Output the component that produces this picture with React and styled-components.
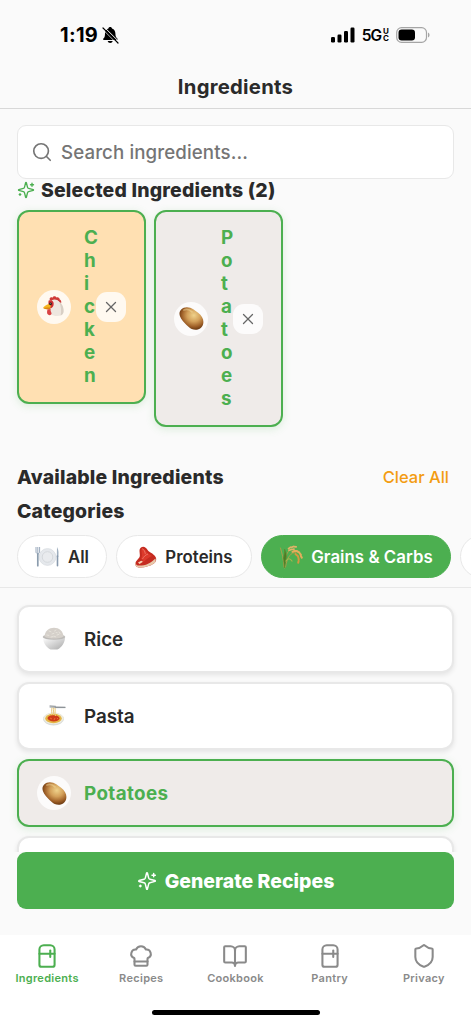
import React from 'react';
import styled, { createGlobalStyle, css } from 'styled-components';
import { Search, X, Refrigerator, ChefHat, BookOpen, Shield } from 'lucide-react';

const GlobalStyle = createGlobalStyle`
  *, *::before, *::after { box-sizing: border-box; }
  html, body { margin: 0; background: #fafafa; }
  body {
    overflow: hidden;
    font-family: Inter, "Liberation Sans", sans-serif;
    color: #2a2a2a;
    -webkit-font-smoothing: antialiased;
  }
  button { font: inherit; border: 0; padding: 0; margin: 0; background: none; color: inherit; }
  svg { display: block; flex: none; }
`;

const GREEN = '#4caf50';

const Screen = styled.div`
  display: flex;
  flex-direction: column;
  width: 471px;
  height: 1024px;
  overflow: hidden;
  background: #fafafa;
`;

const StatusBar = styled.div`
  display: flex;
  align-items: center;
  justify-content: space-between;
  height: 70px;
  padding: 0 41px 0 60px;
  color: #000;
`;

const Clock = styled.div`
  display: flex;
  align-items: center;
  gap: 4px;
  font-size: 20px;
  font-weight: 700;
  letter-spacing: 0.3px;
`;

const Signals = styled.div`
  display: flex;
  align-items: center;
  gap: 7px;
`;

const Network = styled.div`
  display: flex;
  align-items: center;
  font-size: 15.5px;
  font-weight: 600;
  letter-spacing: -1px;
`;

const NetworkSuffix = styled.span`
  display: flex;
  flex-direction: column;
  margin-left: 2px;
  font-size: 8px;
  font-weight: 700;
  line-height: 7px;
  letter-spacing: 0;
`;

const Header = styled.header`
  display: flex;
  justify-content: center;
  height: 39px;
  padding-top: 4px;
  border-bottom: 1px solid #d8d8d8;
`;

const Title = styled.h1`
  margin: 0;
  font-size: 20.3px;
  line-height: 26px;
  font-weight: 700;
  letter-spacing: 0.25px;
`;

const SearchField = styled.label`
  display: flex;
  align-items: center;
  gap: 8px;
  height: 54px;
  margin: 16px 17px 0;
  padding: 0 14px 0 13px;
  border: 1px solid #e8e8e8;
  border-radius: 9px;
  background: #fff;
  color: #757575;
`;

const SearchInput = styled.input`
  flex: 1;
  min-width: 0;
  border: 0;
  padding: 0;
  outline: 0;
  background: none;
  font-family: inherit;
  font-size: 18.7px;
  font-weight: 450;
  letter-spacing: 0.1px;
  &::placeholder { color: #757575; opacity: 1; }
`;

const SectionTitle = styled.h2`
  display: flex;
  align-items: center;
  gap: 6px;
  margin: 0;
  font-size: 19.4px;
  line-height: 24px;
  font-weight: 850;
  letter-spacing: 0.2px;
  svg { color: ${GREEN}; }
`;

const SelectedSection = styled.section`
  height: 285px;
  padding: 0 17px;
  margin-top: -1px;
`;

const ChipRow = styled.div`
  display: flex;
  align-items: flex-start;
  gap: 8px;
  margin-top: 8px;
`;

const activeBox = css`
  border: 2px solid ${GREEN};
  box-shadow: 0 2px 9px rgba(76, 175, 80, 0.18);
`;

const SelectedCard = styled.div`
  ${activeBox}
  display: flex;
  align-items: center;
  width: 129px;
  padding: 15px 18px 14px;
  border-radius: 12px;
  background: ${(p) => p.$tint};
`;

const EmojiDisc = styled.div`
  display: flex;
  align-items: center;
  justify-content: center;
  flex: none;
  width: 34px;
  height: 34px;
  border-radius: 50%;
  background: ${(p) => (p.$plain ? 'transparent' : 'rgba(255, 255, 255, 0.8)')};
`;

const NarrowName = styled.span`
  flex: none;
  width: 14px;
  margin: 0 -2px 0 13px;
  font-size: 18.8px;
  line-height: 22.95px;
  font-weight: 750;
  color: ${GREEN};
  word-break: break-all;
`;

const RemoveButton = styled.button`
  display: flex;
  align-items: center;
  justify-content: center;
  flex: none;
  width: 30px;
  height: 30px;
  border-radius: 11px;
  background: rgba(255, 255, 255, 0.8);
  color: #666;
`;

const SectionHead = styled.div`
  display: flex;
  align-items: center;
  justify-content: space-between;
  height: 25px;
  padding: 0 22px 0 17px;
  margin-top: 1px;
`;

const ClearButton = styled.button`
  color: #f39c12;
  font-size: 16.5px;
  font-weight: 500;
  letter-spacing: 0;
`;

const Categories = styled.section`
  height: 99px;
  padding: 10px 0 0 17px;
  margin-bottom: 17px;
  border-bottom: 1px solid #e8e8e8;
  overflow: hidden;
`;

const Pills = styled.div`
  display: flex;
  gap: 9px;
  margin-top: 12px;
`;

const Pill = styled.button`
  display: flex;
  align-items: center;
  justify-content: center;
  gap: 8px;
  flex: none;
  width: ${(p) => p.$width}px;
  height: 43px;
  border: 1px solid ${(p) => (p.$active ? GREEN : '#e8e8e8')};
  border-radius: 22px;
  background: ${(p) => (p.$active ? GREEN : '#fff')};
  color: ${(p) => (p.$active ? '#fff' : '#2a2a2a')};
  font-size: 16.8px;
  font-weight: 600;
  letter-spacing: 0.05px;
`;

const ListArea = styled.main`
  display: flex;
  flex-direction: column;
  gap: 9px;
  height: 247px;
  padding: 0 17px;
  flex: none;
`;

const ListRow = styled.div`
  display: flex;
  align-items: center;
  gap: 13px;
  flex: none;
  height: 68px;
  padding: 0 18px;
  border: 2px solid #e8e8e8;
  border-radius: 12px;
  background: ${(p) => p.$tint || '#fff'};
  box-shadow: 0 2px 5px rgba(0, 0, 0, 0.09);
  font-size: 18.8px;
  font-weight: ${(p) => (p.$active ? 700 : 600)};
  letter-spacing: ${(p) => (p.$active ? '0.4px' : '0')};
  ${(p) => p.$active && css`${activeBox} color: ${GREEN};`}
`;

const Footer = styled.div`
  position: relative;
  flex: none;
  height: 83px;
  padding: 0 17px;
  background: #fafafa;
`;

const GenerateButton = styled.button`
  display: flex;
  align-items: center;
  justify-content: center;
  gap: 8px;
  width: 100%;
  height: 57px;
  border-radius: 9px;
  background: ${GREEN};
  color: #fff;
  font-size: 19.4px;
  font-weight: 850;
  letter-spacing: 0.05px;
`;

const TabBar = styled.nav`
  display: grid;
  grid-template-columns: repeat(5, 1fr);
  flex: none;
  height: 70px;
  padding-top: 8px;
  background: #fff;
`;

const Tab = styled.button`
  display: flex;
  flex-direction: column;
  align-items: center;
  align-self: start;
  gap: 2px;
  color: ${(p) => (p.$active ? GREEN : '#8a8a8a')};
  font-size: 11px;
  line-height: 14px;
  font-weight: 600;
  letter-spacing: 0.3px;
`;

const HomeArea = styled.div`
  display: flex;
  justify-content: center;
  flex: none;
  height: 19px;
  padding-top: 5px;
  background: #fff;
`;

const HomeIndicator = styled.div`
  width: 168px;
  height: 5px;
  border-radius: 3px;
  background: #000;
`;

const Sparkles = ({ size }) => (
  <svg width={size} height={size} viewBox="0 0 24 24" fill="none" stroke="currentColor" strokeWidth="1.8" strokeLinecap="round" strokeLinejoin="round">
    <path d="M9.937 15.5A2 2 0 0 0 8.5 14.063l-6.135-1.582a.5.5 0 0 1 0-.962L8.5 9.936A2 2 0 0 0 9.937 8.5l1.582-6.135a.5.5 0 0 1 .963 0L14.063 8.5A2 2 0 0 0 15.5 9.937l6.135 1.581a.5.5 0 0 1 0 .964L15.5 14.063a2 2 0 0 0-1.437 1.437l-1.582 6.135a.5.5 0 0 1-.963 0z" />
    <path d="M20 3v4M22 5h-4M4 17v2M5 18H3" />
  </svg>
);

const BellOff = () => (
  <svg width="17" height="18" viewBox="0 0 17 18">
    <path d="M8.2 1C9.2 1 9.8 1.6 10 2.4c2.3.8 3.4 2.7 3.4 5.1 0 3 .8 4 1.9 5.1.7.8.4 1.5-.6 1.5H2c-1 0-1.3-.8-.6-1.5C2.6 11.5 3 10.4 3 7.5c0-2.500 1.100-4.400 3.400-5.100C6.600 1.600 7.200 1 8.200 1Z" />
    <path d="M5.700 15h5c-.3 1.200-1.200 1.900-2.500 1.900S6 16.200 5.700 15Z" />
    <path d="M2 .9 16.800 15.500" stroke="#fafafa" strokeWidth="1" />
    <path d="M1 2 16 17" stroke="#000" strokeWidth="1.200" strokeLinecap="round" />
    <path d="M.5 3.200 14 16.700" stroke="#fafafa" strokeWidth=".7" />
  </svg>
);

const Bars = () => (
  <svg width="24" height="16" viewBox="0 0 24 16">
    <rect x="0" y="10" width="4" height="5.500" rx="1.200" />
    <rect x="6.500" y="7.500" width="4" height="8" rx="1.200" />
    <rect x="13" y="4" width="4" height="11.500" rx="1.200" />
    <rect x="19.500" y="0.500" width="4" height="15" rx="1.200" />
  </svg>
);

const Battery = () => (
  <svg width="34" height="16" viewBox="0 0 34 16">
    <rect x=".7" y=".7" width="29.800" height="14.600" rx="4.800" fill="none" stroke="#a5a5a5" strokeWidth="1.200" />
    <rect x="2.500" y="2.500" width="16.500" height="11" rx="3.200" />
    <path d="M32 5.500c2 .8 2 4.200 0 5Z" fill="#a5a5a5" />
  </svg>
);

const Chicken = () => (
  <svg width="24" height="24" viewBox="0 0 24 24">
    <path d="M7.600 4.600C7.500 2.200 9.400 1.900 10.500 2.700 11.500.9 13.600 1 14.500 2.500c1.800-.7 3.100.5 3.200 2 1.300.5 2 2 1.400 3.800L15.500 5.500l-6 .7Z" fill="#cf3a38" />
    <path d="M8 8c.6-3.700 6.300-5 9-1.300 1.200 1.700 1.300 3 2.700 4.500 1.700 1.900 2 3.800 1.800 5.800-.3 2.800-2.500 3.900-6.500 3.900-5.200 0-7-2.100-6.800-5.500Z" fill="#eee7df" />
    <path d="M17 6.700c3.700 2 5 6.500 4.500 10.300-.3 1.900-1.400 2.900-2.900 3.400 1-4.300.6-9.500-1.600-13.700Z" fill="#d8cfc5" />
    <path d="M6.500 5.800c2.700-1.300 5.200.2 5.200 3.100 0 2.400-1.600 4.200-3.600 4.500L6.400 11Z" fill="#cf3033" />
    <path d="M6.600 9c-2.300.9-4.800 2.400-5.500 4 1.600.9 4.400 1.200 7 .5l.8-3Z" fill="#f5b51f" />
    <path d="M1.100 13c2.400-.6 4.700-.8 7.400-.4l-.6 1.600c-2.500.5-5.200.1-6.800-1.200Z" fill="#db8312" />
    <path d="M5.500 14.400c-.6 2-.7 4.100.5 5.200 1.500 1.300 3.900.6 3.500-1.500-.3-1.500-1.300-2.200-.8-4.200Z" fill="#d94344" />
    <circle cx="8.500" cy="8.800" r="1.400" fill="#25201c" />
    <circle cx="8.200" cy="8.300" r=".4" fill="#fff" />
  </svg>
);

const Potato = () => (
  <svg width="25" height="25" viewBox="0 0 25 25">
    <defs>
      <radialGradient id="potatoSkin" cx="60%" cy="36%" r="66%">
        <stop offset="0" stopColor="#efd28b" />
        <stop offset=".42" stopColor="#d3a05a" />
        <stop offset=".75" stopColor="#9f6028" />
        <stop offset="1" stopColor="#63340f" />
      </radialGradient>
    </defs>
    <path d="M2.200 3.400C5.200.3 10.700.6 14.300 3.300c3 2.300 7 4.600 8.800 7.900 2.300 4 1.500 9-2 11.300-3.700 2.500-8.800 1.300-11.600-1.700-2.600-2.700-5.300-5-7.300-8.100C.1 9.400-.3 6 2.200 3.400Z" fill="url(#potatoSkin)" />
    <path d="M5 4c3-1.500 5.500-.5 8 1.800" stroke="#f5dfa1" strokeWidth="1.700" opacity=".45" fill="none" strokeLinecap="round" />
  </svg>
);

const Plate = () => (
  <svg width="25" height="22" viewBox="0 0 25 22">
    <circle cx="12.500" cy="11" r="8.400" fill="#e5e8ec" stroke="#d7dbe0" strokeWidth=".7" />
    <circle cx="12.500" cy="11" r="5.300" fill="#e9ebee" stroke="#d0d4d8" strokeWidth=".8" />
    <path d="M1 1v5c0 2 3.600 2 3.600 0V1M2.800 1v8" stroke="#8fa0b5" strokeWidth=".9" fill="none" />
    <path d="M2.800 8v11.700" stroke="#8b9cad" strokeWidth="1.700" strokeLinecap="round" />
    <path d="M22 1c2 3 1.600 7 1.300 10h-1.500Z" fill="#9fafbf" />
    <path d="M22.500 10v9.800" stroke="#8799ad" strokeWidth="1.600" strokeLinecap="round" />
  </svg>
);

const Meat = () => (
  <svg width="22" height="22" viewBox="0 0 22 22">
    <path d="M6 1.600C8.500-.3 11 1.600 12.800 4.200c1.500 2.300 3.500 2 6.700 5.200 2.500 2.500 2.200 6-.7 8.200-3.800 2.800-10.200 4.300-15.200 3.800C.3 21-.3 17.900 1 15.600c.9-1.500 2.300-2.600 3.300-4C5.400 9.800 4.500 7.300 4.500 5.100c0-1.500.4-2.600 1.500-3.500Z" fill="#c52b20" />
    <path d="M1 15.800c-.5 2.500.6 3.700 3 3.800 6 .2 12-2.500 16.400-7.200.7 2.100.2 3.900-1.600 5.200-3.800 2.800-10.200 4.300-15.200 3.800C.4 21-.2 18.300 1 15.800Z" fill="#e7c9ab" />
    <path d="M6.500 3c2-1 3.800.7 5 2.700 1.300 2.200 3.300 2.500 5.500 4.300-3 1.200-5.700 3.200-8.300 6L6 12.500C8 10 6 6.300 6.500 3Z" fill="#dc392b" />
    <path d="M7.300 2.700c1.500.7 2.700 2.700 3 5.200M13 8c-2.600 1-4.300 2.700-5.500 5" stroke="#f08070" strokeWidth=".8" fill="none" />
    <path d="m3 16.500 3.300-1.700 1.700 1-3.500 2.200Z" fill="#f5d4b4" />
  </svg>
);

const Grain = () => (
  <svg width="24" height="24" viewBox="0 0 24 24" fill="none" strokeLinecap="round">
    <path d="M5.500 23C5.500 14 7 7 12 4M6.500 22C8 12 12 7 17 7.500M5 22C4.500 14 3 8 1.500 3" stroke="#b59b4a" strokeWidth=".9" />
    <path d="M4.500 13 5.500 23 7 14C8 10 7 7 5.500 4c.3 4-.5 6-1 9Z" fill="#4f7a26" stroke="#5a8a2b" strokeWidth=".6" />
    <path d="M7 16c2-3 4-3 6 0" stroke="#a9b64f" strokeWidth="1.200" />
    <path d="M9.500 3.600 11.500 2.200M12.500 2.400l2-.9M15 1.700l2.200.2M10 5.300l2-.6M13 4.500l2-.3" stroke="#e0b368" strokeWidth="1.700" />
    <path d="m13.500 6.800 1.800-.8M16 6l2-.1M18.500 6.500l1.700.8M20.600 8.200l1.200 1.500M21.800 10.700l1 2" stroke="#e3ad5c" strokeWidth="2" />
    <path d="m16.500 9 1.300 1.200M18.500 10.500l.8 1.700M19.500 13l.2 1.900M19.600 16l-.4 1.800" stroke="#d59840" strokeWidth="2" />
  </svg>
);

const Rice = () => (
  <svg width="24" height="24" viewBox="0 0 24 24">
    <defs>
      <linearGradient id="bowl" x1="0" y1="0" x2="1" y2="1">
        <stop stopColor="#fff" />
        <stop offset="1" stopColor="#a9a9a9" />
      </linearGradient>
    </defs>
    <path d="M1 10.500h22c0 5-3.500 10-7.600 12.100H8.600C4.300 20.500 1 15.500 1 10.500Z" fill="url(#bowl)" />
    <ellipse cx="12" cy="10" rx="11.300" ry="2.700" fill="#bdbbb8" />
    <path d="M2.500 9.500C3 4 7 .8 12 .8S21 4 21.500 9.500c-4 2.800-15 2.800-19 0Z" fill="#d5d0ca" />
    <path d="m7 4 2 .8M14 3l-1.500 1M4.800 8l2 .4M10 7l2-.7M15 8l2-.7M17 5l1 1.500M9 10l2-.4M14 5.500l1.300.3M12 9.200l1.500.5" stroke="#e8e4dc" strokeWidth=".9" strokeLinecap="round" />
  </svg>
);

const Pasta = () => (
  <svg width="24" height="22" viewBox="0 0 24 22">
    <ellipse cx="11.500" cy="14" rx="10.500" ry="6.500" fill="#d9dcda" />
    <ellipse cx="11.500" cy="13.300" rx="10" ry="5.800" fill="#efede0" />
    <ellipse cx="11.500" cy="13.500" rx="8.300" ry="4.700" fill="#e5b646" />
    <path d="M5.500 13.500c0-2 2-3 5.500-3.300 4-.3 6.500 1.300 6.700 3.300-1.500 4-10.200 4-12.200 0Z" fill="#cf3b19" />
    <path d="m8 13 2 1M12 15l1-2M15 14l1-1" stroke="#ed6e36" strokeWidth="1" />
    <path d="M9.500 10c1-2-.5-4 .5-7.500M11.500 10c.5-3-.5-5 0-7.500M13.500 11c-1-3 0-5-.5-8" stroke="#e9c878" strokeWidth="1" fill="none" />
    <path d="M8 2h5.500l9.500.2M13 2.600h10M8 .9l5.500.4" stroke="#858a8e" strokeWidth=".9" fill="none" strokeLinecap="round" />
  </svg>
);

const selected = [
  { name: 'Chicken', tint: '#ffe0b2', Icon: Chicken },
  { name: 'Potatoes', tint: '#efebe9', Icon: Potato },
];

const categories = [
  { name: 'All', width: 90, Icon: Plate },
  { name: 'Proteins', width: 136, Icon: Meat },
  { name: 'Grains & Carbs', width: 190, Icon: Grain, active: true },
  { name: '', width: 150 },
];

const ingredients = [
  { name: 'Rice', Icon: Rice },
  { name: 'Pasta', Icon: Pasta },
  { name: 'Potatoes', Icon: Potato, active: true, tint: '#efebe9' },
];

const tabs = [
  { name: 'Ingredients', Icon: Refrigerator, active: true },
  { name: 'Recipes', Icon: ChefHat },
  { name: 'Cookbook', Icon: BookOpen },
  { name: 'Pantry', Icon: Refrigerator },
  { name: 'Privacy', Icon: Shield },
];

export default function App() {
  return (
    <Screen>
      <GlobalStyle />
      <StatusBar>
        <Clock>1:19<BellOff /></Clock>
        <Signals>
          <Bars />
          <Network>5G<NetworkSuffix><span>U</span><span>C</span></NetworkSuffix></Network>
          <Battery />
        </Signals>
      </StatusBar>
      <Header><Title>Ingredients</Title></Header>
      <SearchField>
        <Search size={22} strokeWidth={1.8} />
        <SearchInput placeholder="Search ingredients..." />
      </SearchField>
      <SelectedSection>
        <SectionTitle>
          <Sparkles size={18} />
          <span>Selected Ingredients (2)</span>
        </SectionTitle>
        <ChipRow>
          {selected.map(({ name, tint, Icon }) => (
            <SelectedCard key={name} $tint={tint}>
              <EmojiDisc><Icon /></EmojiDisc>
              <NarrowName>{name}</NarrowName>
              <RemoveButton aria-label={`Remove ${name}`}><X size={18} strokeWidth={1.7} /></RemoveButton>
            </SelectedCard>
          ))}
        </ChipRow>
      </SelectedSection>
      <SectionHead>
        <SectionTitle>Available Ingredients</SectionTitle>
        <ClearButton>Clear All</ClearButton>
      </SectionHead>
      <Categories>
        <SectionTitle>Categories</SectionTitle>
        <Pills>
          {categories.map(({ name, width, Icon, active }) => (
            <Pill key={name} $width={width} $active={active}>
              {Icon && <Icon />}
              {name}
            </Pill>
          ))}
        </Pills>
      </Categories>
      <ListArea>
        {ingredients.map(({ name, Icon, active, tint }) => (
          <ListRow key={name} $active={active} $tint={tint}>
            <EmojiDisc $plain={!active}><Icon /></EmojiDisc>
            {name}
          </ListRow>
        ))}
        <ListRow />
      </ListArea>
      <Footer>
        <GenerateButton><Sparkles size={20} />Generate Recipes</GenerateButton>
      </Footer>
      <TabBar>
        {tabs.map(({ name, Icon, active }) => (
          <Tab key={name} $active={active}>
            <Icon size={26} strokeWidth={1.9} />
            {name}
          </Tab>
        ))}
      </TabBar>
      <HomeArea><HomeIndicator /></HomeArea>
    </Screen>
  );
}
